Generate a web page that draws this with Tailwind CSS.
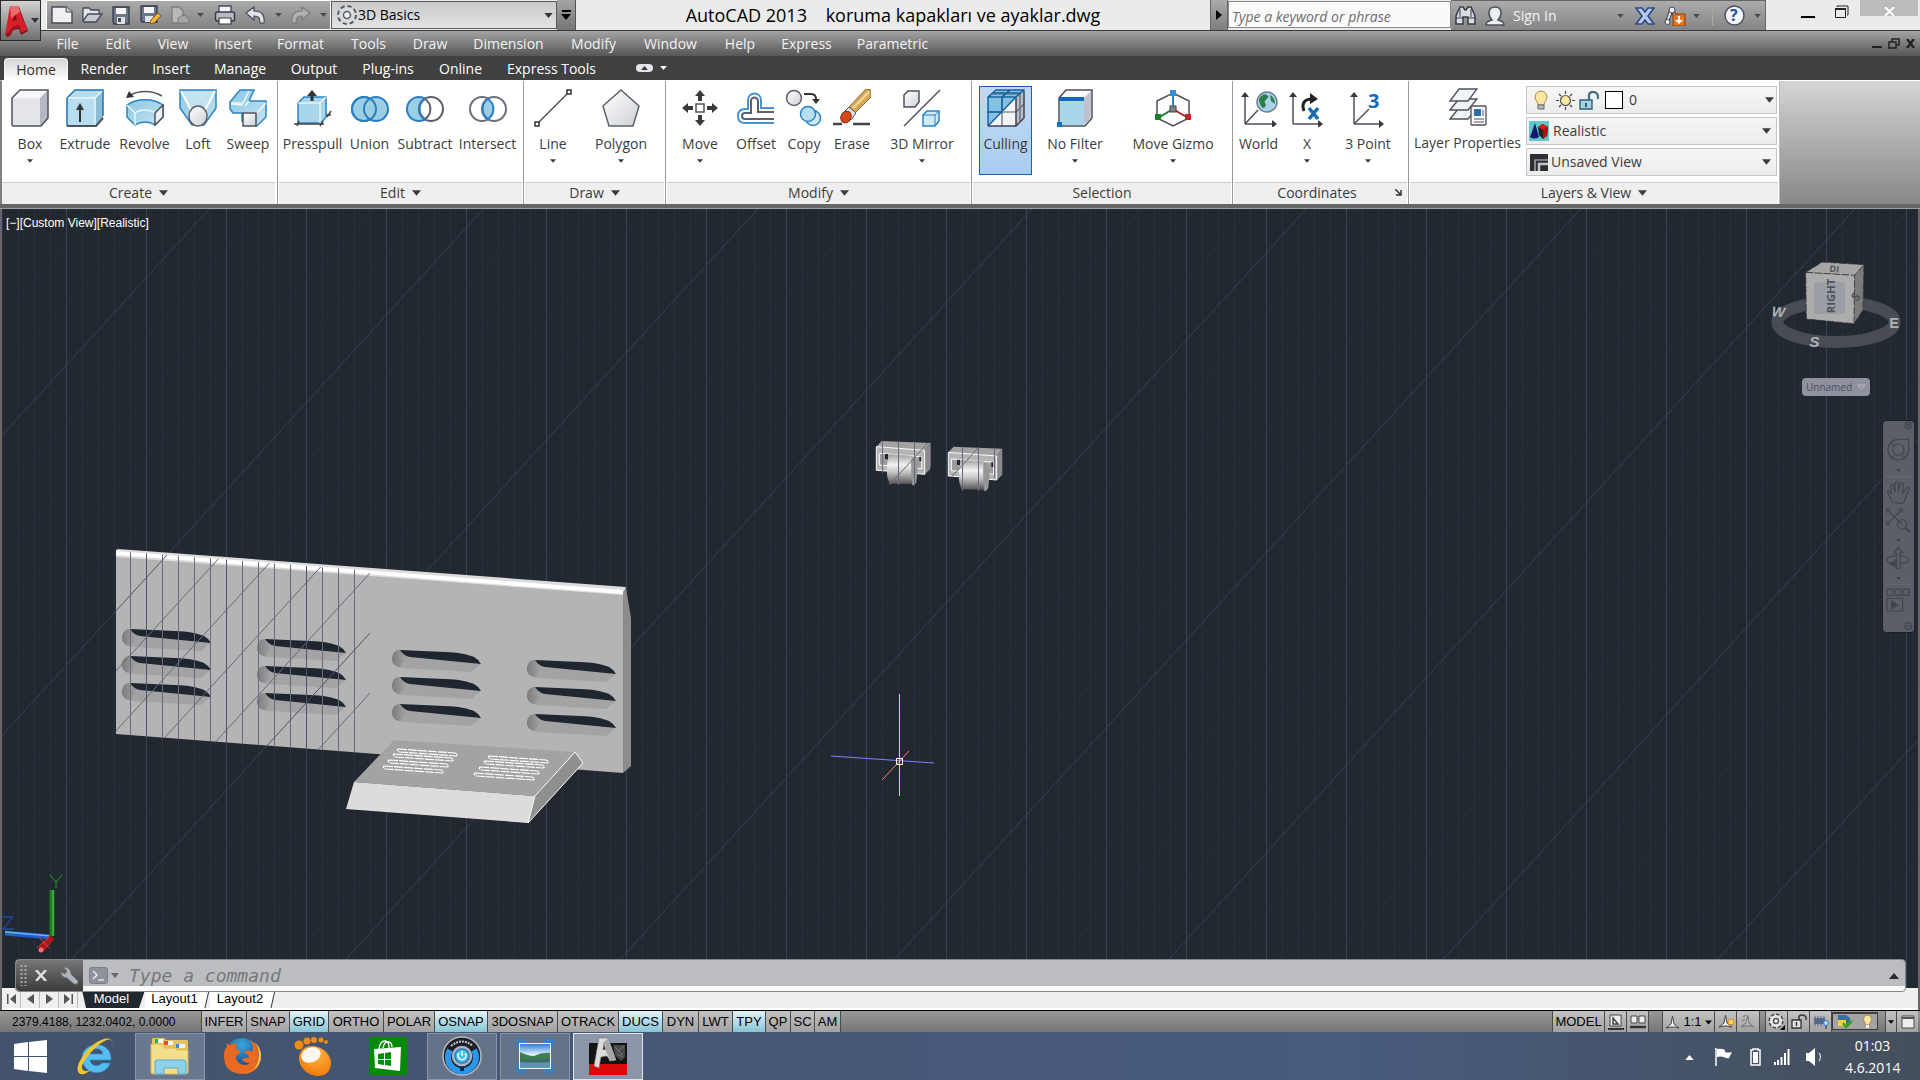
<!doctype html>
<html lang="tr">
  <head>
    <meta charset="UTF-8" />
    <meta name="viewport" content="width=device-width, initial-scale=1.0" />
    <title>AutoCAD 2013 - koruma kapakları ve ayaklar.dwg</title>
    <script src="https://cdn.jsdelivr.net/npm/@tailwindcss/browser@4"></script>
  </head>
  <body class="min-h-screen flex flex-col bg-[#666666] font-['Open_Sans','Noto_Sans',sans-serif] text-sm text-[#3c3c3c] overflow-hidden">

    <!-- shared icons and gradients -->
    <svg class="absolute w-0 h-0">
      <defs>
        <symbol id="tri" viewBox="0 0 10 6"><path d="M0 0h10L5 6z" fill="currentColor"/></symbol>
        <linearGradient id="gBlue" x1="0" y1="0" x2="1" y2="1"><stop offset="0" stop-color="#8cc8e4"/><stop offset="1" stop-color="#c4e4f1"/></linearGradient>
        <linearGradient id="gGray" x1="0" y1="0" x2="1" y2="1"><stop offset="0" stop-color="#ffffff"/><stop offset="1" stop-color="#cfd1d6"/></linearGradient>
        <linearGradient id="gCyl" x1="0" y1="0" x2="0" y2="1"><stop offset="0" stop-color="#a0a0a0"/><stop offset=".35" stop-color="#f2f2f2"/><stop offset=".6" stop-color="#c4c4c4"/><stop offset="1" stop-color="#505050"/></linearGradient>
        <linearGradient id="gCap" x1="0" y1="0" x2="1" y2="0"><stop offset="0" stop-color="#7c7c7c"/><stop offset="1" stop-color="#a5a5a5"/></linearGradient>
        <linearGradient id="gPhoto" x1="0" y1="0" x2="0" y2="1"><stop offset="0" stop-color="#2f7fd8"/><stop offset=".45" stop-color="#e6f3fb"/></linearGradient>
        <radialGradient id="gOrange" cx=".4" cy=".3" r=".8"><stop offset="0" stop-color="#ffb347"/><stop offset="1" stop-color="#ee7500"/></radialGradient>
        <radialGradient id="gFox" cx=".5" cy=".2" r=".7"><stop offset="0" stop-color="#38a8e0"/><stop offset="1" stop-color="#1c3f7c"/></radialGradient>
      </defs>
    </svg>

    <!-- title bar -->
    <header class="h-[31px] flex items-stretch bg-[#ebebeb] border-b border-[#3a3a3a]">
      <button class="relative z-10 w-[41px] h-[41px] shrink-0 flex items-center border border-[#2c2c2c] bg-linear-to-b from-[#d2d2d2] to-[#6f6f6f]" aria-label="Application menu">
        <svg class="w-[28px] h-[34px]" viewBox="0 0 28 34">
          <path d="M5 33 12 3h6l9 24-7 4-2-6-6 1-3 6z" fill="#7e1016"/>
          <path d="M4 31 9 2h8l9 24-6 3-2-8-7 2-2 8zM12 17l4-1-2-7z" fill="#d81e28"/>
          <path d="M9 2h8l2 6-9 6z" fill="#ee6a68"/>
          <path d="m4 31 8-8 6-2 1 3-6 1-4 6z" fill="#a3141c"/>
        </svg>
        <svg class="w-2 h-[5px] ml-[2px] text-[#2d3442]"><use href="#tri"/></svg>
      </button>
      <div class="ml-[5px] w-[285px] flex items-center bg-linear-to-b from-[#ababab] to-[#828282] border border-white">
        <button class="ml-[4px] w-[22px]" aria-label="New"><svg class="w-[22px] h-[18px]" viewBox="0 0 22 18"><path d="M1 1h14l6 5v11H1z" fill="#f0f0f3" stroke="#444a58" stroke-width="1.4"/><path d="M15 1v5h6" fill="#cfd2d8" stroke="#444a58"/></svg></button>
        <button class="ml-[8px] w-[22px]" aria-label="Open"><svg class="w-[22px] h-[16px]" viewBox="0 0 22 16"><path d="M2 14V1h6l2 2h8v4" fill="#e3e5e9" stroke="#444a58" stroke-width="1.3"/><path d="m2 14 5-7h14l-6 8H3z" fill="#c5c9d0" stroke="#444a58" stroke-width="1.3"/></svg></button>
        <button class="ml-[8px] w-[20px]" aria-label="Save"><svg class="w-[20px] h-[19px]" viewBox="0 0 20 19"><path d="M2 1h16v17H3l-1-2z" fill="#6c7688" stroke="#363d4b" stroke-width="1.3"/><path d="M5 2h10v6H5z" fill="#f6f6f8"/><path d="M6 11h8v7H6z" fill="#dde0e6"/><path d="M7 12h3v4H7z" fill="#434c5d"/></svg></button>
        <button class="ml-[9px] w-[22px]" aria-label="Save As"><svg class="w-[22px] h-[20px]" viewBox="0 0 22 20"><path d="M1 1h16v16H2l-1-1z" fill="#6c7688" stroke="#363d4b" stroke-width="1.3"/><path d="M4 2h10v6H4z" fill="#f6f6f8"/><path d="M5 11h8v6H5z" fill="#dde0e6"/><path d="m10 19 1-4 7-7 3 3-7 7z" fill="#f0b73c" stroke="#8a5a16"/></svg></button>
        <button class="ml-[8px] w-[20px]" aria-label="Plot preview"><svg class="w-[20px] h-[19px]" viewBox="0 0 20 19"><path d="M2 17V1h7l4 4v12z" fill="#b9b9b9" stroke="#7b7b7b" stroke-width="1.3"/><path d="M8 17v-5l3-2 4-1 4 5v3z" fill="#a6a6a6" stroke="#7b7b7b"/></svg></button>
        <svg class="ml-[7px] w-[7px] h-[4px] text-[#4a4a4a]"><use href="#tri"/></svg>
        <button class="ml-[10px] w-[22px]" aria-label="Print"><svg class="w-[22px] h-[20px]" viewBox="0 0 22 20"><path d="M5 8V1h12v7" fill="#f6f6f8" stroke="#454b57" stroke-width="1.3"/><rect x="1.5" y="7" width="19" height="9" rx="2" fill="#b8bbc2" stroke="#343a46" stroke-width="1.5"/><path d="M5 13h12v6H5z" fill="#fff" stroke="#343a46" stroke-width="1.2"/></svg></button>
        <button class="ml-[9px] w-[21px]" aria-label="Undo"><svg class="w-[21px] h-[18px]" viewBox="0 0 21 18"><path d="M1 7 9 1v4c8 0 11 4 10 12h-4c0-5-1-7-6-7v4z" fill="#e2e4e8" stroke="#434957" stroke-width="1.2"/></svg></button>
        <svg class="ml-[9px] w-[7px] h-[4px] text-[#4a4a4a]"><use href="#tri"/></svg>
        <button class="ml-[8px] w-[21px]" aria-label="Redo"><svg class="w-[21px] h-[18px]" viewBox="0 0 21 18"><path d="M20 7 12 1v4C4 5 1 9 2 17h4c0-5 1-7 6-7v4z" fill="#b0b0b0" stroke="#7b7b7b" stroke-width="1.2"/></svg></button>
        <svg class="ml-[9px] w-[7px] h-[4px] text-[#4a4a4a]"><use href="#tri"/></svg>
      </div>
      <div class="w-[226px] h-[28px] mt-px flex items-center border border-[#5c5c5c] bg-linear-to-b from-[#cacaca] to-[#e3e3e3] text-black">
        <svg class="ml-[4px] w-[22px] h-[22px]" viewBox="0 0 22 22"><circle cx="11" cy="11" r="8.5" fill="#d8d9dc" stroke="#555b66" stroke-width="3" stroke-dasharray="4 2.7"/><circle cx="11" cy="11" r="8" fill="#d8dade"/><circle cx="11" cy="11" r="3.5" fill="#f4f4f4" stroke="#555b66" stroke-width="1.5"/></svg>
        <select class="flex-1 appearance-none bg-transparent" aria-label="Workspace"><option>3D Basics</option></select>
        <svg class="mr-[3px] w-[9px] h-[5px] text-[#333333]"><use href="#tri"/></svg>
      </div>
      <button class="w-[19px] flex flex-col items-center justify-center gap-[2px] bg-linear-to-b from-[#a5a5a5] to-[#757575] border-r border-[#555555]" aria-label="Customize">
        <span class="w-[9px] h-[2px] bg-black"></span><svg class="w-[10px] h-[6px] text-black"><use href="#tri"/></svg>
      </button>
      <h1 class="flex-1 text-center text-[18px] leading-[30px] text-black whitespace-pre">AutoCAD 2013    koruma kapakları ve ayaklar.dwg</h1>
      <button class="w-[18px] flex items-center justify-center bg-linear-to-b from-[#ababab] to-[#7d7d7d] border-x border-[#666666]" aria-label="Collapse search"><svg class="w-[6px] h-[10px]" viewBox="0 0 6 10"><path d="M0 0v10l6-5z"/></svg></button>
      <input class="w-[223px] h-[27px] mt-px px-[3px] pt-[3px] italic bg-[#fafafa] border border-[#888888] placeholder:text-[#6d6d6d]" placeholder="Type a keyword or phrase" aria-label="Search" />
      <div class="w-[315px] flex items-center bg-linear-to-b from-[#ababab] to-[#858585] border-r border-t border-[#666666] text-[#f4f4f4]">
        <svg class="ml-[4px] w-[21px] h-[20px]" viewBox="0 0 21 20"><path d="M1 18V10l3-7 1-2h3l2 3h1l2-3h3l1 2 3 7v8h-7v-7H8v7z" fill="#dadce0" stroke="#363c48" stroke-width="1.5"/><path d="M1 12h7M13 12h7M5 3v8M16 3v8" stroke="#363c48"/></svg>
        <svg class="ml-[9px] w-[20px] h-[20px]" viewBox="0 0 20 20"><path d="M1 19c0-4 3-4 6-5-2-2-3-4-3-7 0-4 2-6 6-6s6 2 6 6c0 3-1 5-3 7 3 1 6 1 6 5z" fill="#eceef1" stroke="#4a505c" stroke-width="1.5"/></svg>
        <button class="ml-[8px] flex-1 text-left">Sign In</button>
        <svg class="w-[7px] h-[4px] text-[#4a4a4a]"><use href="#tri"/></svg>
        <svg class="ml-[11px] w-[20px] h-[18px]" viewBox="0 0 20 18"><path d="M1 1h6l3 4 3-4h6l-6 8 6 8h-6l-3-4-3 4H1l6-8z" fill="#b8c9e8" stroke="#2d4886" stroke-width="1.6"/></svg>
        <svg class="ml-[9px] w-[22px] h-[20px]" viewBox="0 0 22 20"><path d="m7 5-4 11M9 5l2 5" stroke="#3f4553" stroke-width="4"/><path d="m7 5-4 11M9 5l2 5" stroke="#e8e8ea" stroke-width="2"/><circle cx="8" cy="4" r="3" fill="#eee" stroke="#3f4553"/><circle cx="3.500" cy="16" r="2.500" fill="#eee" stroke="#3f4553"/><path d="M9 8h12v12H9z" fill="#e8731c" stroke="#8c3c08"/><path d="M14 10h2v4h3l-4 4-4-4h3z" fill="#fff"/></svg>
        <svg class="ml-[7px] w-[7px] h-[4px] text-[#4a4a4a]"><use href="#tri"/></svg>
        <span class="ml-[12px] h-[20px] w-px bg-[#a8a8a8]"></span>
        <button class="ml-[11px] w-[21px]" aria-label="Help"><svg class="w-[21px] h-[21px]" viewBox="0 0 21 21"><circle cx="10.500" cy="10.500" r="9.500" fill="#f4f5f8" stroke="#4c5262" stroke-width="1.500"/><text x="6" y="16" font-size="16" font-weight="bold" fill="#2353a4">?</text></svg></button>
        <svg class="ml-[9px] mr-[4px] w-[7px] h-[4px] text-[#4a4a4a]"><use href="#tri"/></svg>
      </div>
      <div class="w-[154px] flex items-start">
        <button class="w-[56px] h-[20px] flex justify-center items-end pb-[2px] pl-[28px]" aria-label="Minimize"><span class="w-[14px] h-[2px] bg-black"></span></button>
        <button class="w-[38px] h-[24px] flex items-center justify-center" aria-label="Restore"><svg class="w-[15px] h-[14px]" viewBox="0 0 15 14"><path d="M3 2V1h11v9h-1" fill="none" stroke="#222"/><path d="M1.500 4.500h10v8h-10z" fill="none" stroke="#222"/><path d="M1 4h11" stroke="#222" stroke-width="2"/></svg></button>
        <button class="w-[58px] h-[16px] bg-[#bcbcbc] flex items-center justify-center pt-[7px]" aria-label="Close"><svg class="w-[11px] h-[9px]" viewBox="0 0 11 9"><path d="m1 0 9 9M10 0 1 9" stroke="#fff" stroke-width="2"/></svg></button>
      </div>
    </header>

    <!-- menu bar -->
    <nav class="h-[25px] flex items-center pl-[43px] pr-[5px] text-center bg-linear-to-b from-[#a4a4a4] to-[#575757] text-[#f2f2f2]">
      <a href="#" class="w-[49px]">File</a>
      <a href="#" class="w-[52px]">Edit</a>
      <a href="#" class="w-[58px]">View</a>
      <a href="#" class="w-[62px]">Insert</a>
      <a href="#" class="w-[73px]">Format</a>
      <a href="#" class="w-[63px]">Tools</a>
      <a href="#" class="w-[60px]">Draw</a>
      <a href="#" class="w-[97px]">Dimension</a>
      <a href="#" class="w-[73px]">Modify</a>
      <a href="#" class="w-[81px]">Window</a>
      <a href="#" class="w-[58px]">Help</a>
      <a href="#" class="w-[75px]">Express</a>
      <a href="#" class="w-[97px]">Parametric</a>
      <div class="ml-auto flex items-center gap-[6px]">
        <button class="w-[10px] pt-[6px]" aria-label="Minimize drawing"><span class="block h-[2px] bg-[#222222]"></span></button>
        <button aria-label="Restore drawing"><svg class="w-[12px] h-[11px]" viewBox="0 0 12 11"><path d="M4 4V1h7v6H8M1 4h7v6H1z" fill="none" stroke="#222" stroke-width="1.500"/></svg></button>
        <button aria-label="Close drawing"><svg class="w-[9px] h-[9px]" viewBox="0 0 9 9"><path d="m1 0 7 9M8 0 1 9" stroke="#222" stroke-width="2.400"/></svg></button>
      </div>
    </nav>

    <!-- ribbon tabs -->
    <nav class="h-[24px] flex items-center pt-[2px] text-center bg-[#404040] text-white">
      <a href="#" class="ml-[4px] h-[22px] w-[64px] leading-[22px] rounded-t-sm bg-linear-to-b from-[#d6d6d6] to-white text-[#333333] border-t border-x border-[#f4f4f4]">Home</a>
      <a href="#" class="w-[72px]">Render</a>
      <a href="#" class="w-[62px]">Insert</a>
      <a href="#" class="w-[76px]">Manage</a>
      <a href="#" class="w-[72px]">Output</a>
      <a href="#" class="w-[76px]">Plug-ins</a>
      <a href="#" class="w-[69px]">Online</a>
      <a href="#" class="w-[113px]">Express Tools</a>
      <button class="ml-[28px] pb-[2px] flex items-center gap-[7px]" aria-label="Minimize ribbon">
        <span class="w-[17px] h-[8px] rounded-sm bg-[#e2e4ea] flex items-center justify-center"><svg class="w-[7px] h-[4px] rotate-180 text-[#333333]"><use href="#tri"/></svg></span>
        <svg class="w-[7px] h-[4px]"><use href="#tri"/></svg>
      </button>
    </nav>

    <!-- ribbon -->
    <div class="h-[124px] flex items-stretch border-l-2 border-[#808080] border-t border-t-white bg-linear-to-b from-[#d5d5d5] to-[#888888]">
      <section class="w-[276px] flex flex-col bg-white border-r border-[#9a9a9a]">
        <div class="flex-1 flex pl-[3px] pt-[8px]">
          <button class="w-[50px] flex flex-col items-center">
            <svg class="w-[38px] h-[38px]" viewBox="0 0 38 38"><path d="M1 9 9 1h28v28l-7 8H2l-1-1z" fill="#f8f8fa"/><path d="M1 9h28v28H2l-1-1z" fill="#e4e5ea"/><path d="m29 9 8-8v28l-7 8h-1z" fill="#b4b8c2"/><path d="M1 9 9 1h28v28l-7 8H2l-1-1z" fill="none" stroke="#4d515c" stroke-width="1.500"/></svg>
            <span class="mt-[7px] leading-[20px]">Box</span><svg class="mt-[5px] w-[6px] h-[4px]"><use href="#tri"/></svg>
          </button>
          <button class="w-[60px] flex flex-col items-center">
            <svg class="w-[38px] h-[38px]" viewBox="0 0 38 38"><path d="M1 9 9 1h28v28l-7 8H1z" fill="#b7deee"/><path d="m29 9 8-8v28l-7 8h-1z" fill="#8cbdd4"/><path d="M1 9 9 1h28v26M1 9v28" fill="none" stroke="#1f73b5" stroke-width="1.500"/><path d="M2 9h27v27M29 9l7-7" fill="none" stroke="#e8f6fb" stroke-width="1.500"/><path d="M1 37h29l7-8" fill="none" stroke="#4d515c" stroke-width="2"/><path d="M14 33V19" stroke="#333" stroke-width="2"/><path d="m10 21 4-7 4 7z" fill="#333"/></svg>
            <span class="mt-[7px] leading-[20px]">Extrude</span>
          </button>
          <button class="w-[59px] flex flex-col items-center">
            <svg class="w-[38px] h-[38px]" viewBox="0 0 38 38"><path d="M1 16c10-7 26-7 36 0v12l-8 8c-6-4-14-4-20 0l-8-8z" fill="url(#gBlue)" stroke="#2a83c4" stroke-width="1.500"/><path d="m1 16 8 8c5-4 15-4 20 0M9 24v12" fill="none" stroke="#e8f6fb" stroke-width="1.500"/><path d="m29 24 8-8v12l-8 8z" fill="#f0f1f3" stroke="#4d515c" stroke-width="1.500"/><path d="M3 7C12 1 26 1 36 7" fill="none" stroke="#555" stroke-width="1.500"/><path d="M0 9 3 2l5 6z" fill="#333"/></svg>
            <span class="mt-[7px] leading-[20px]">Revolve</span>
          </button>
          <button class="w-[48px] flex flex-col items-center">
            <svg class="w-[38px] h-[38px]" viewBox="0 0 38 38"><path d="M1 1h36v18L25 36H13L1 19z" fill="url(#gBlue)" stroke="#2a83c4" stroke-width="1.500"/><path d="m2 2 11 19h12L36 2z" fill="#c3e3f1"/><path d="m2 2 11 21M36 2 25 23" stroke="#fff" stroke-width="2"/><ellipse cx="19" cy="27" rx="9" ry="10" fill="url(#gGray)" stroke="#5b606b" stroke-width="1.500"/></svg>
            <span class="mt-[7px] leading-[20px]">Loft</span>
          </button>
          <button class="w-[52px] flex flex-col items-center">
            <svg class="w-[38px] h-[38px]" viewBox="0 0 38 38"><path d="M11 1h14l-5 11h17v16l-9 9-4-1-11-4v-8H4l-3-4v-7z" fill="url(#gBlue)" stroke="#2a83c4" stroke-width="1.500"/><path d="M2 14h12l6-12M14 24h14l9-10M2 15l12 1M20 12l-4 5" fill="none" stroke="#eef8fc" stroke-width="1.500"/><path d="M14 24h13v13H14z" fill="url(#gGray)" stroke="#4d515c" stroke-width="1.500"/></svg>
            <span class="mt-[7px] leading-[20px]">Sweep</span>
          </button>
        </div>
        <h2 class="h-[22px] mr-[2px] pb-[2px] flex items-center justify-center gap-[7px] bg-[#efefef] border-t border-[#cccccc]">Create <svg class="w-[9px] h-[6px]"><use href="#tri"/></svg></h2>
      </section>
      <section class="w-[246px] flex flex-col bg-white border-r border-[#9a9a9a]">
        <div class="flex-1 flex pl-[5px] pt-[8px]">
          <button class="w-[59px] flex flex-col items-center">
            <svg class="w-[38px] h-[38px]" viewBox="0 0 38 38"><path d="m4 14 6-6h22v20l-5 6H4z" fill="#a9d7ea" stroke="#2a83c4" stroke-width="1.500"/><path d="M4 14h22v20M26 14l6-6" fill="none" stroke="#e8f6fb" stroke-width="1.500"/><path d="M0 35h30M3 37l2-5M26 37l3-5M33 28l4-6M32 26h5" stroke="#444" stroke-width="1.500"/><path d="M18 12V6" stroke="#333" stroke-width="3"/><path d="m13 7 5-6 5 6z" fill="#333"/></svg>
            <span class="mt-[7px] leading-[20px]">Presspull</span>
          </button>
          <button class="w-[55px] flex flex-col items-center">
            <svg class="w-[38px] h-[38px]" viewBox="0 0 38 38"><g fill="#9bcfe6" stroke="#2a7fc2" stroke-width="2"><circle cx="13" cy="20" r="12"/><circle cx="25" cy="20" r="12"/><circle cx="13" cy="20" r="12" fill="none"/></g></svg>
            <span class="mt-[7px] leading-[20px]">Union</span>
          </button>
          <button class="w-[56px] flex flex-col items-center">
            <svg class="w-[38px] h-[38px]" viewBox="0 0 38 38"><circle cx="13" cy="20" r="12" fill="#9bcfe6" stroke="#2a7fc2" stroke-width="2"/><circle cx="25" cy="20" r="12" fill="#fff" stroke="#5b606b" stroke-width="2"/><path d="M19 10a12 12 0 0 1 0 20" fill="none" stroke="#5b606b" stroke-width="2"/><path d="M19 10a12 12 0 0 0 0 20" fill="none" stroke="#2a7fc2" stroke-width="2"/></svg>
            <span class="mt-[7px] leading-[20px]">Subtract</span>
          </button>
          <button class="w-[69px] flex flex-col items-center">
            <svg class="w-[38px] h-[38px]" viewBox="0 0 38 38"><g fill="#fff" stroke="#6b707b" stroke-width="2"><circle cx="13" cy="20" r="12"/><circle cx="25" cy="20" r="12"/></g><path d="M19 10a12 12 0 0 1 0 20 12 12 0 0 1 0-20z" fill="#9bcfe6" stroke="#2a7fc2" stroke-width="2"/></svg>
            <span class="mt-[7px] leading-[20px]">Intersect</span>
          </button>
        </div>
        <h2 class="h-[22px] mx-px pb-[2px] flex items-center justify-center gap-[7px] bg-[#efefef] border-t border-[#cccccc]">Edit <svg class="w-[9px] h-[6px]"><use href="#tri"/></svg></h2>
      </section>
      <section class="w-[142px] flex flex-col bg-white border-r border-[#9a9a9a]">
        <div class="flex-1 flex pl-[4px] pt-[8px]">
          <button class="w-[50px] flex flex-col items-center">
            <svg class="w-[38px] h-[38px]" viewBox="0 0 38 38"><path d="M3 35 35 3" stroke="#4d515c" stroke-width="1.500"/><path d="M1 33h4v4H1zM33 1h4v4h-4z" fill="#fff" stroke="#333" stroke-width="1.500"/></svg>
            <span class="mt-[7px] leading-[20px]">Line</span><svg class="mt-[5px] w-[6px] h-[4px]"><use href="#tri"/></svg>
          </button>
          <button class="w-[86px] flex flex-col items-center">
            <svg class="w-[38px] h-[38px]" viewBox="0 0 38 38"><path d="m19 1 18 16-6 20H7L1 17z" fill="url(#gGray)" stroke="#5b606b" stroke-width="1.500"/></svg>
            <span class="mt-[7px] leading-[20px]">Polygon</span><svg class="mt-[5px] w-[6px] h-[4px]"><use href="#tri"/></svg>
          </button>
        </div>
        <h2 class="h-[22px] mx-px pb-[2px] flex items-center justify-center gap-[7px] bg-[#efefef] border-t border-[#cccccc]">Draw <svg class="w-[9px] h-[6px]"><use href="#tri"/></svg></h2>
      </section>
      <section class="w-[306px] flex flex-col bg-white border-r border-[#9a9a9a]">
        <div class="flex-1 flex pl-[5px] pt-[8px]">
          <button class="w-[58px] flex flex-col items-center">
            <svg class="w-[38px] h-[38px]" viewBox="0 0 38 38"><g fill="#3a3a3e"><path d="m19 1 5 6h-3v5h-4V7h-3zM19 37l5-6h-3v-5h-4v5h-3zM1 19l6-5v3h5v4H7v3zM37 19l-6-5v3h-5v4h5v3z"/></g><path d="M15 15h8v8h-8z" fill="#fff" stroke="#555" stroke-width="1.500"/></svg>
            <span class="mt-[7px] leading-[20px]">Move</span><svg class="mt-[5px] w-[6px] h-[4px]"><use href="#tri"/></svg>
          </button>
          <button class="w-[54px] flex flex-col items-center">
            <svg class="w-[38px] h-[38px]" viewBox="0 0 38 38"><g fill="none" stroke-width="2"><path d="M37 34H8q-7 0-7-7t7-7h3V11a6 6 0 0 1 13 0v8h13" stroke="#4a93d0"/><path d="M37 30H8q-3 0-3-3t3-3h6V12a3 3 0 0 1 7 0v11h16" stroke="#5b606b"/></g></svg>
            <span class="mt-[7px] leading-[20px]">Offset</span>
          </button>
          <button class="w-[42px] flex flex-col items-center">
            <svg class="w-[38px] h-[38px]" viewBox="0 0 38 38"><circle cx="9" cy="9" r="7.500" fill="url(#gGray)" stroke="#5b606b" stroke-width="1.500"/><circle cx="28" cy="29" r="7.500" fill="#cfe9f5" stroke="#2a83c4" stroke-width="1.500"/><circle cx="23" cy="25" r="7.500" fill="#b9def0" stroke="#2a83c4" stroke-width="1.500"/><path d="M19 5h7q5 0 5 5" fill="none" stroke="#333" stroke-width="2"/><path d="m27 10 4 5 4-5z" fill="#333"/></svg>
            <span class="mt-[7px] leading-[20px]">Copy</span>
          </button>
          <button class="w-[54px] flex flex-col items-center">
            <svg class="w-[38px] h-[38px]" viewBox="0 0 38 38"><path d="m16 18 17-18 5 1v7L22 24z" fill="#d7a957" stroke="#8a6a2d"/><path d="m20 19 16-16" stroke="#f6dca0" stroke-width="2"/><path d="m10 24 6-6 7 6-5 7z" fill="#e2e3e6" stroke="#4d515c"/><ellipse cx="13" cy="28" rx="5" ry="6" transform="rotate(30 13 28)" fill="#d4491a" stroke="#8a2b0b"/><path d="M0 35h9M20 35h17" stroke="#444" stroke-width="2.500"/></svg>
            <span class="mt-[7px] leading-[20px]">Erase</span>
          </button>
          <button class="w-[86px] flex flex-col items-center">
            <svg class="w-[38px] h-[38px]" viewBox="0 0 38 38"><path d="M1 37 37 1" stroke="#4d515c" stroke-width="1.500"/><path d="m1 6 4-4h11v11l-4 5H1z" fill="url(#gGray)" stroke="#4d515c" stroke-width="1.500"/><path d="m20 26 4-4h12v10l-4 5H20z" fill="#cfeaf6" stroke="#2a83c4" stroke-width="1.500"/><path d="M20 26h12v11M32 26l4-4" fill="none" stroke="#2a83c4"/></svg>
            <span class="mt-[7px] leading-[20px]">3D Mirror</span><svg class="mt-[5px] w-[6px] h-[4px]"><use href="#tri"/></svg>
          </button>
        </div>
        <h2 class="h-[22px] mx-px pb-[2px] flex items-center justify-center gap-[7px] bg-[#efefef] border-t border-[#cccccc]">Modify <svg class="w-[9px] h-[6px]"><use href="#tri"/></svg></h2>
      </section>
      <section class="w-[261px] flex flex-col bg-white border-r border-[#9a9a9a]">
        <div class="flex-1 flex pl-[7px] pt-[5px]">
          <button class="w-[53px] h-[89px] pt-[2px] flex flex-col items-center border border-[#1464b4] bg-linear-to-b from-[#c2daf4] to-[#a9cdf0]">
            <svg class="w-[38px] h-[38px]" viewBox="0 0 38 38"><path d="m1 8 8-7h28v28l-8 8H1z" fill="#f4f5f8"/><path d="m29 8 8-7v28l-8 8z" fill="#b9bdc6"/><path d="M1 8h28L1 37zM1 8l8-7h28l-8 7z" fill="#86c0e2"/><path d="M1 23h28l8-8M15 8v29M15 8l8-7M5 5h28v27" fill="none" stroke="#5c6470" stroke-width="1.200"/><path d="M1 37V8l8-7h28l-8 7H1M5 4h28M15 8l8-7M15 8v15H1M29 8 1 37" fill="none" stroke="#14649f" stroke-width="1.500"/><path d="M29 9v28l8-8V2M1 37h28" fill="none" stroke="#3f4653" stroke-width="1.500"/></svg>
            <span class="mt-[7px] leading-[20px]">Culling</span>
          </button>
          <button class="w-[86px] pt-[3px] flex flex-col items-center">
            <svg class="w-[38px] h-[38px]" viewBox="0 0 38 38"><path d="m3 9 7-8h26v28l-7 8H3z" fill="#fafafb" stroke="#4d515c" stroke-width="1.500"/><path d="m28 9 7-7v27l-7 7z" fill="#bfc2ca"/><path d="M4 12h24v24H4z" fill="#a9d6e8"/><path d="M3 8h25v4H3z" fill="#0f67b5"/><path d="M1 33h5v5H1z" fill="#1173c6"/></svg>
            <span class="mt-[7px] leading-[20px]">No Filter</span><svg class="mt-[5px] w-[6px] h-[4px]"><use href="#tri"/></svg>
          </button>
          <button class="w-[110px] pt-[3px] flex flex-col items-center">
            <svg class="w-[38px] h-[38px]" viewBox="0 0 38 38"><path d="m19 4 16 8v17l-16 8-16-8V12z" fill="none" stroke="#4d515c" stroke-width="1.500"/><path d="M19 20V5" stroke="#2a83c4" stroke-width="2"/><path d="M19 20 4 29" stroke="#1e7a2b" stroke-width="2"/><path d="m19 20 15 9" stroke="#b3202a" stroke-width="2"/><rect x="16" y="1" width="6" height="6" fill="#2c8fe0"/><rect x="1" y="25" width="6" height="6" fill="#16852a"/><rect x="31" y="25" width="6" height="6" fill="#c8202c"/><rect x="16" y="17" width="6" height="6" fill="#7d8087" stroke="#444"/></svg>
            <span class="mt-[7px] leading-[20px]">Move Gizmo</span><svg class="mt-[5px] w-[6px] h-[4px]"><use href="#tri"/></svg>
          </button>
        </div>
        <h2 class="h-[22px] mx-px pb-[2px] flex items-center justify-center bg-[#efefef] border-t border-[#cccccc]">Selection</h2>
      </section>
      <section class="w-[176px] flex flex-col bg-white border-r border-[#9a9a9a]">
        <div class="flex-1 flex pl-[3px] pt-[8px]">
          <button class="w-[45px] flex flex-col items-center">
            <svg class="w-[38px] h-[38px]" viewBox="0 0 38 38"><path d="M5 35V7M5 35h28M5 35l13-14" fill="none" stroke="#4d515c" stroke-width="1.500"/><path d="m1 8 4-5 4 5zM32 31l5 4-5 4z" fill="#3a3a3e"/><circle cx="27" cy="13" r="10" fill="#a9d3ea" stroke="#6c7f92" stroke-width="1.500"/><path d="M19 10c3-6 8-5 9-3s-2 3-3 5 2 3 0 6-6-2-6-8M30 6c4 2 5 6 5 9l-4-3z" fill="#2f7d4b"/></svg>
            <span class="mt-[7px] leading-[20px]">World</span>
          </button>
          <button class="w-[52px] flex flex-col items-center">
            <svg class="w-[38px] h-[38px]" viewBox="0 0 38 38"><path d="M5 35V7M5 35h28" fill="none" stroke="#4d515c" stroke-width="1.500"/><path d="m1 8 4-5 4 5zM30 31l5 4-5 4z" fill="#3a3a3e"/><path d="M16 22c-3-8 1-12 8-12" fill="none" stroke="#222" stroke-width="3"/><path d="m22 4 8 6-8 5z" fill="#222"/><path d="m21 19 9 11M30 19l-9 11" stroke="#1568b4" stroke-width="3.500"/></svg>
            <span class="mt-[7px] leading-[20px]">X</span><svg class="mt-[5px] w-[6px] h-[4px]"><use href="#tri"/></svg>
          </button>
          <button class="w-[70px] flex flex-col items-center">
            <svg class="w-[38px] h-[38px] overflow-visible" viewBox="0 0 38 38"><path d="M5 35V7M5 35h28M5 35l15-15" fill="none" stroke="#4d515c" stroke-width="1.500"/><path d="m1 8 4-5 4 5zM30 31l5 4-5 4z" fill="#3a3a3e"/><text x="19" y="19" font-size="20" font-weight="bold" fill="#1568b4">3</text></svg>
            <span class="mt-[7px] leading-[20px]">3 Point</span><svg class="mt-[5px] w-[6px] h-[4px]"><use href="#tri"/></svg>
          </button>
        </div>
        <h2 class="h-[22px] mx-px px-[5px] pb-[2px] flex items-center bg-[#efefef] border-t border-[#cccccc]"><span class="flex-1 text-center">Coordinates</span><svg class="w-[7px] h-[7px]" viewBox="0 0 7 7"><path d="m0 0 5 5M6 1v5H1" fill="none" stroke="#333" stroke-width="1.500"/></svg></h2>
      </section>
      <section class="w-[371px] flex flex-col bg-white border-r border-[#bbbbbb]">
        <div class="flex-1 flex pt-[5px] pr-[2px]">
          <button class="w-[117px] flex flex-col items-center">
            <svg class="w-[38px] h-[40px]" viewBox="0 0 38 40"><g fill="#f2f3f5" stroke="#4d515c" stroke-width="1.300"><path d="M1 33 10 22h18l-9 11z"/><path d="M1 24l9-11h18l-9 11z"/><path d="M1 15 10 3h18l-9 12z"/><rect x="22" y="20" width="15" height="19" rx="1" fill="#fafafa"/></g><path d="M25 23h7v7h-7z" fill="#2b6fb0"/><path d="M25 33h10M25 36h10M34 24v6" stroke="#555"/></svg>
            <span class="mt-[7px] leading-[20px]">Layer Properties</span>
          </button>
          <div class="flex-1 flex flex-col gap-[3px]">
            <div class="h-[28px] flex items-center border border-[#c6c6c6] bg-linear-to-b from-[#f6f6f6] to-[#ececec]">
              <svg class="ml-[6px] w-[16px] h-[20px]" viewBox="0 0 16 20"><path d="M8 1a6 6 0 0 1 6 6c0 4-3 4-3 8H5c0-4-3-4-3-8a6 6 0 0 1 6-6z" fill="#fbe6a2" stroke="#a58b46"/><path d="M5 15h6v4H5z" fill="#b8bcc4" stroke="#666"/></svg>
              <svg class="ml-[7px] w-[19px] h-[19px]" viewBox="0 0 19 19"><circle cx="9.500" cy="9.500" r="5" fill="#fbe6a2" stroke="#555" stroke-width="1.200"/><path d="M9.500 0v3M9.500 16v3M0 9.500h3M16 9.500h3M3 3l2 2M14 14l2 2M3 16l2-2M14 5l2-2" stroke="#444" stroke-width="1.200"/></svg>
              <svg class="ml-[4px] w-[20px] h-[19px]" viewBox="0 0 20 19"><path d="M1 9h12v9H1z" fill="#a7d2e2" stroke="#2f5f78" stroke-width="1.400"/><path d="M10 9V5q0-4 4-4t5 4v3" fill="none" stroke="#3c6d86" stroke-width="2.200"/><path d="M7 12v4" stroke="#2f5f78" stroke-width="2"/></svg>
              <span class="ml-[6px] w-[18px] h-[18px] border border-black bg-white"></span>
              <select class="ml-[6px] flex-1 appearance-none" aria-label="Layer"><option>0</option></select>
              <svg class="mr-[2px] w-[9px] h-[6px]"><use href="#tri"/></svg>
            </div>
            <div class="h-[28px] flex items-center border border-[#c6c6c6] bg-linear-to-b from-[#f6f6f6] to-[#ececec]">
              <svg class="ml-[2px] w-[20px] h-[20px]" viewBox="0 0 20 20"><path d="M0 0h20v20H0z" fill="#5fc9c9"/><path d="M6 2 1 16q4 3 9 0z" fill="#101a6e"/><path d="m9 6 5-3 5 3-1 9-4 3-4-4z" fill="#222"/><path d="m9 6 5-3 5 3-5 3z" fill="#e01818"/><path d="m14 9 5-3-1 9-4 3z" fill="#a81212"/></svg>
              <select class="ml-[4px] flex-1 appearance-none" aria-label="Visual style"><option>Realistic</option></select>
              <svg class="mr-[5px] w-[9px] h-[6px]"><use href="#tri"/></svg>
            </div>
            <div class="h-[28px] flex items-center border border-[#c6c6c6] bg-linear-to-b from-[#f6f6f6] to-[#ececec]">
              <svg class="ml-[3px] w-[18px] h-[17px]" viewBox="0 0 18 17"><path d="M0 0h18v17H0z" fill="#2d2f33"/><path d="M5 17V6h13" fill="none" stroke="#c3c5c9" stroke-width="1.200"/><path d="M9 17v-7h9" fill="none" stroke="#c3c5c9" stroke-width="2.500"/></svg>
              <select class="ml-[3px] flex-1 appearance-none" aria-label="View"><option>Unsaved View</option></select>
              <svg class="mr-[5px] w-[9px] h-[6px]"><use href="#tri"/></svg>
            </div>
          </div>
        </div>
        <h2 class="h-[22px] mx-px pb-[2px] flex items-center justify-center gap-[7px] bg-[#efefef] border-t border-[#cccccc]">Layers &amp; View <svg class="w-[9px] h-[6px]"><use href="#tri"/></svg></h2>
      </section>
    </div>
    <div class="h-[5px] bg-[#666666] border-b border-[#a0a0a0]"></div>

    <!-- drawing area -->
    <main class="relative flex-1 mx-[2px] bg-[#212830]">
      <svg class="absolute inset-0 w-full h-full overflow-hidden">
        <defs>
          <path id="minor" fill="none"/>
          <path id="major" fill="none"/>
          <clipPath id="plateClip"><path d="M116 551 370 571V754L116 734z"/></clipPath>
          <clipPath id="partsClip"><path d="M876 446 883 441 931 443V466L920 474 917 485H888L883 473 876 470zM948 452 954 446 1003 449V472L990 481 986 491H960L957 478 948 476z"/></clipPath>
          <g id="slot">
            <path d="M130 629c-6 0-8 5-8 9 0 5 5 9 11 9l68 4 10-8z" fill="#a3a3a3"/>
            <path d="M130 629c-6 0-8 5-8 9 0 4 3 8 8 8l7-9z" fill="url(#gCap)"/>
            <path d="m130 629 45 2c12 0 25 3 29 5q4 2 7 7l-71-7q-6-1-10-7z" fill="#1f2630"/>
          </g>
          <g id="louver"><use href="#slot"/><use href="#slot" y="27"/><use href="#slot" y="54"/></g>
          <g id="vents" fill="#a3a3a3" stroke="#fff" stroke-width="1.200" stroke-dasharray="9 1">
            <path d="m398 749 57 4q4 2 1 3l-56-4q-4-1-2-3z"/>
            <path d="m394 754 57 4q4 2 1 3l-56-4q-4-1-2-3z"/>
            <path d="m389 760 57 4q4 2 1 3l-56-4q-4-1-2-3z"/>
            <path d="m384 766 57 4q4 2 1 3l-56-4q-4-1-2-3z"/>
          </g>
          <g id="foot">
            <path d="m169 80 16-17 146 6-17 22z" fill="#a2a2a2"/>
            <path d="m314 91 17-22v78l-17 17z" fill="#8a8a8a"/>
            <path d="m169 80 145 11v72l-34-3-80-7-31-2z" fill="#b4b4b4" stroke="#fff" stroke-width="3"/>
            <path d="m178 100 127 10v36l-27-3-100-8z" fill="#9c9c9c" stroke="#fff" stroke-width="3"/>
            <path d="M195 102h9v16h-9zM298 110h6v14h-6z" fill="#1f2630"/>
            <path d="m208 103 68 4q-6 45 5 86l-73-2q-16-40 0-88z" fill="url(#gCyl)"/>
            <path d="M276 110q12 10 18 27l-5 50q-6 12-12 9-6-40-1-86z" fill="#969696"/>
          </g>
        </defs>
        <g transform="translate(-2 -209)">
          <use href="#minor" stroke="#292f3e"/>
          <use href="#major" stroke="#3a4056"/>

          <!-- guard plate -->
          <path d="m116 553 507 38v182L116 734z" fill="#b4b4b4"/>
          <path d="m116 550 2-1 508 38-3 8-507-38z" fill="#dcdcdc"/>
          <path d="m116 553 507 39" stroke="#fff" stroke-width="4"/>
          <path d="m623 592 3-4 5 30v148l-8 7z" fill="#8c8c8c"/>
          <use href="#louver"/><use href="#louver" x="135" y="10"/><use href="#louver" x="270" y="21"/><use href="#louver" x="405" y="31"/>
          <g clip-path="url(#plateClip)"><use href="#minor" stroke="#686a7e"/><use href="#major" stroke="#50536a"/></g>

          <!-- lower cover -->
          <path d="m394 740 181 12-40 44-181-14z" fill="#a3a3a3"/>
          <path d="m354 782 181 14-7 27-182-14z" fill="#dcdcdc"/>
          <path d="m575 752 8 11-55 60 7-27z" fill="#8f8f8f" stroke="#fff"/>
          <use href="#vents"/><use href="#vents" x="91" y="7"/>

          <!-- feet -->
          <g transform="translate(820 420) scale(.3333)"><use href="#foot"/><use href="#foot" x="216" y="17"/></g>
          <g clip-path="url(#partsClip)"><use href="#minor" stroke="#686a7e"/><use href="#major" stroke="#50536a"/></g>

          <!-- cursor -->
          <path d="m831 756 103 7" stroke="#8080ff" stroke-width="1.200"/>
          <path d="m882 780 27-29" stroke="#ff7f7f"/>
          <path d="M899.500 694v102" stroke="#80ff80"/>
          <path d="M896.500 758.500h6v6h-6z" fill="none" stroke="#fff"/>
        </g>
      </svg>

      <p class="absolute left-[4px] top-[6px] text-xs text-white font-['Liberation_Sans',sans-serif]">[−][Custom View][Realistic]</p>

      <!-- UCS icon -->
      <svg class="absolute left-0 bottom-[30px] w-[70px] h-[90px]" viewBox="2 868 70 90">
        <path d="m5 933 46 4" stroke="#1a5fd0" stroke-width="5"/><path d="m5 932 46 4" stroke="#6fb0f4" stroke-width="1.500"/>
        <path d="M52 890v46" stroke="#178017" stroke-width="5"/><path d="M53 890v46" stroke="#3ca83c" stroke-width="2"/>
        <path d="M52 937 41 950" stroke="#b01818" stroke-width="6"/><circle cx="41" cy="950" r="2.500" fill="#f07070"/>
        <path d="m50 875 6 7 6-7M56 882v6" fill="none" stroke="#22a522"/>
        <path d="M2 917h11L3 929h11" fill="none" stroke="#2255cc"/>
        <path d="m37 935 12 13M49 937 37 948" stroke="#e04040"/>
      </svg>

      <!-- view cube -->
      <svg class="absolute right-0 top-[31px] w-[178px] h-[112px]" viewBox="0 0 534 336">
        <ellipse cx="288" cy="246" rx="176" ry="60" fill="none" stroke="#484c54" stroke-width="36"/>
        <path d="m197 97 50-31 125 8-28 32z" fill="#a6a6a6"/>
        <path d="m344 106 28-32-3 136-27 41z" fill="#7b7b7b"/>
        <path d="m197 97 147 9-2 145-143-14z" fill="#acacac"/>
        <path d="M222 127h93v95h-93z" fill="#9b9ea4"/>
        <path d="m197 97 147 9-2 145-143-14zM197 97l50-31 125 8-28 32M372 74l-3 136-27 41" fill="none" stroke="#30343a" stroke-width="2.500" stroke-dasharray="22 5"/>
        <g font-weight="bold" fill="#4d535d">
          <text transform="translate(284 220) rotate(-90)" font-size="34">RIGHT</text>
          <text transform="translate(268 95) rotate(4)" font-size="27">DI</text>
          <text transform="translate(350 186) rotate(-50)" font-size="36">S</text>
        </g>
        <g font-weight="bold" fill="#b0b3b8" font-family="Liberation Sans">
          <text transform="rotate(6 92 226)" x="94" y="228" font-style="italic" font-size="42">W</text>
          <text x="448" y="264" font-size="44">E</text>
          <text x="208" y="322" font-style="italic" font-size="46">S</text>
        </g>
      </svg>
      <button class="absolute right-[48px] top-[169px] w-[68px] h-[18px] rounded bg-[#8e919e] flex items-center justify-between px-[4px] text-[10px] text-[#4c505e]">Unnamed <svg class="w-[9px] h-[6px]" viewBox="0 0 9 6"><path d="M1 1h7L4.500 5z" fill="none" stroke="#b8bac6"/></svg></button>

      <!-- navigation bar -->
      <div class="absolute right-[3px] top-[211px] w-[33px] h-[213px] rounded border border-[#1b2026] bg-[#5b6067]">
        <svg class="w-[31px] h-[211px]" viewBox="431 546 93 633" fill="none" stroke="#41464e" stroke-width="3.500">
          <circle cx="507" cy="559" r="10"/><path d="m502 554 10 10M512 554l-10 10"/>
          <path d="M477 601h31v31a31 31 0 1 1-31-31z"/><circle cx="477" cy="632" r="17"/>
          <path d="m454 661 12-14M500 661l-11-14M454 608l12 13"/>
          <path d="M471 691h14l-7 7z" fill="#333840" stroke="none"/><path d="M438 713h78M438 1036h78" stroke="#6c7178" stroke-width="2"/>
          <path d="m460 790-16-30q4-8 12 4l-2-24q6-9 9 4l4 14v-26q6-8 10 1v26l6-25q8-6 9 3l-3 27 12-17q8-2 8 3l-15 39-8 5z"/>
          <path d="m444 812 43 43M487 812l-43 43M442 822v-11h11M478 811h11v11M442 846v11h11"/><circle cx="488" cy="856" r="14"/><path d="m498 866 14 13" stroke-width="7"/>
          <path d="M471 901h14l-7 7zM471 1015h14l-7 7z" fill="#333840" stroke="none"/>
          <path d="M471 989v-47h-7l13-17 13 17h-8v47zM471 950c-38 4-38 20-8 24M482 950c34 4 34 20 2 24"/><path d="m452 974 15-9v18z" fill="#41464e"/>
          <path d="M443 1051h18v18h-18zM467 1051h18v18h-18zM491 1051h18v18h-18zM443 1078h47v38h-47z"/><path d="m457 1086 18 12-18 12z" fill="#41464e"/>
          <circle cx="507" cy="1161" r="10"/><path d="M501 1161h12"/>
        </svg>
      </div>

      <!-- command line, hangs a little over the layout tabs -->
      <div class="absolute z-20 left-[13px] right-[12px] -bottom-[4px] h-[33px] flex items-center rounded border border-[#85878a] bg-linear-to-b from-[#bcbdc0] from-85% to-[#fafafa] to-85%">
        <div class="w-[67px] h-full flex items-center rounded-l bg-linear-to-b from-[#777777] to-[#3c3c3c]">
          <svg class="ml-[4px] w-[8px] h-[21px]" viewBox="0 0 8 21"><path d="M1.500 0v21M5.500 0v21" stroke="#a8a8a8" stroke-width="2" stroke-dasharray="2 2"/></svg>
          <button class="ml-[7px]" aria-label="Close command line"><svg class="w-[12px] h-[11px]" viewBox="0 0 12 11"><path d="m1 0 10 11M11 0 1 11" stroke="#e0e0e0" stroke-width="2.500"/></svg></button>
          <button class="ml-[13px]" aria-label="Command settings"><svg class="w-[19px] h-[19px]" viewBox="0 0 19 19"><path d="M3 1 7 5 5 8 1 6q0 5 6 6l7 6q4 1 4-3L11 8q0-7-8-7z" fill="#b0b4bb" stroke="#6b6f76" stroke-width=".8"/></svg></button>
        </div>
        <svg class="ml-[6px] w-[19px] h-[17px]" viewBox="0 0 19 17"><rect x=".5" y=".5" width="18" height="16" rx="2" fill="#8d929b" stroke="#7b808a"/><path d="m4 4 4 4-4 4M9 13h6" fill="none" stroke="#e4e6ea" stroke-width="1.600"/></svg>
        <svg class="ml-[3px] w-[8px] h-[5px] text-[#66686c]"><use href="#tri"/></svg>
        <input class="ml-[10px] flex-1 text-lg leading-6 italic font-['DejaVu_Sans_Mono',monospace] placeholder:text-[#77787b]" placeholder="Type a command" aria-label="Command" />
        <svg class="mr-[6px] w-[10px] h-[6px] rotate-180 text-[#2a2a2a]"><use href="#tri"/></svg>
      </div>
    </main>

    <!-- layout tabs -->
    <div class="h-[22px] mx-[2px] pt-[2px] flex items-stretch bg-[#efefef] text-[13px] text-black font-['Liberation_Sans',sans-serif] border-b-2 border-white">
      <div class="flex text-[#555555]">
        <button class="w-[19px] flex items-center justify-center border-r border-[#bbbbbb]" aria-label="First"><svg class="w-[9px] h-[10px]" viewBox="0 0 9 10"><path d="M0 0h1.500v10H0zM9 0v10L3 5z" fill="currentColor"/></svg></button>
        <button class="w-[19px] flex items-center justify-center border-r border-[#bbbbbb]" aria-label="Previous"><svg class="w-[7px] h-[10px]" viewBox="0 0 7 10"><path d="M7 0v10L0 5z" fill="currentColor"/></svg></button>
        <button class="w-[19px] flex items-center justify-center border-r border-[#bbbbbb]" aria-label="Next"><svg class="w-[7px] h-[10px]" viewBox="0 0 7 10"><path d="M0 0v10l7-5z" fill="currentColor"/></svg></button>
        <button class="w-[19px] flex items-center justify-center border-r border-[#bbbbbb]" aria-label="Last"><svg class="w-[9px] h-[10px]" viewBox="0 0 9 10"><path d="M7.500 0H9v10H7.500zM0 0v10l6-5z" fill="currentColor"/></svg></button>
      </div>
      <button class="w-[67px] bg-[#212830] text-white [clip-path:polygon(4px_0,100%_0,61px_100%,8px_100%)]">Model</button>
      <button class="w-[59px] bg-white">Layout1</button>
      <svg class="w-[6px] h-full" viewBox="0 0 6 18"><path d="M0 0h5L1 18H0z" fill="#fff"/><path d="M5 0 1 18" stroke="#333"/></svg>
      <button class="w-[60px] bg-white">Layout2</button>
      <svg class="w-[6px] h-full" viewBox="0 0 6 18"><path d="M0 0h5L1 18H0z" fill="#fff"/><path d="M5 0 1 18" stroke="#333"/></svg>
    </div>

    <!-- status bar -->
    <div class="h-[22px] flex items-stretch border-t border-black bg-linear-to-b from-[#999999] to-[#757575] text-[13px] text-black font-['Liberation_Sans',sans-serif]">
      <span class="w-[202px] pl-[12px] pt-px text-xs leading-[20px] border-r border-[#4a4a4a]">2379.4188, 1232.0402, 0.0000</span>
      <button class="w-[45px] pt-px border-r border-[#4a4a4a] bg-linear-to-b from-[#c4c2c4] to-[#a2a2a2]">INFER</button>
      <button class="w-[43px] pt-px border-r border-[#4a4a4a] bg-linear-to-b from-[#c4c2c4] to-[#a2a2a2]">SNAP</button>
      <button class="w-[39px] pt-px border-r border-[#4a4a4a] bg-linear-to-b from-[#e2f2f8] to-[#86c5d6]">GRID</button>
      <button class="w-[55px] pt-px border-r border-[#4a4a4a] bg-linear-to-b from-[#c4c2c4] to-[#a2a2a2]">ORTHO</button>
      <button class="w-[51px] pt-px border-r border-[#4a4a4a] bg-linear-to-b from-[#c4c2c4] to-[#a2a2a2]">POLAR</button>
      <button class="w-[53px] pt-px border-r border-[#4a4a4a] bg-linear-to-b from-[#e2f2f8] to-[#86c5d6]">OSNAP</button>
      <button class="w-[70px] pt-px border-r border-[#4a4a4a] bg-linear-to-b from-[#c4c2c4] to-[#a2a2a2]">3DOSNAP</button>
      <button class="w-[61px] pt-px border-r border-[#4a4a4a] bg-linear-to-b from-[#c4c2c4] to-[#a2a2a2]">OTRACK</button>
      <button class="w-[44px] pt-px border-r border-[#4a4a4a] bg-linear-to-b from-[#e2f2f8] to-[#86c5d6]">DUCS</button>
      <button class="w-[36px] pt-px border-r border-[#4a4a4a] bg-linear-to-b from-[#c4c2c4] to-[#a2a2a2]">DYN</button>
      <button class="w-[34px] pt-px border-r border-[#4a4a4a] bg-linear-to-b from-[#c4c2c4] to-[#a2a2a2]">LWT</button>
      <button class="w-[33px] pt-px border-r border-[#4a4a4a] bg-linear-to-b from-[#e2f2f8] to-[#86c5d6]">TPY</button>
      <button class="w-[25px] pt-px border-r border-[#4a4a4a] bg-linear-to-b from-[#c4c2c4] to-[#a2a2a2]">QP</button>
      <button class="w-[24px] pt-px border-r border-[#4a4a4a] bg-linear-to-b from-[#c4c2c4] to-[#a2a2a2]">SC</button>
      <button class="w-[26px] pt-px border-r border-[#4a4a4a] bg-linear-to-b from-[#c4c2c4] to-[#a2a2a2]">AM</button>

      <div class="ml-auto mr-[2px] flex items-stretch">
        <button class="w-[53px] pt-px border-x border-[#4a4a4a] bg-linear-to-b from-[#c4c2c4] to-[#a2a2a2]">MODEL</button>
        <button class="w-[22px] flex items-center justify-center border-r border-[#4a4a4a] bg-linear-to-b from-[#c4c2c4] to-[#a2a2a2]" aria-label="Quick view layouts"><svg class="w-[16px] h-[16px]" viewBox="0 0 16 16"><path d="M2 1h11v11H2z" fill="#eee" stroke="#444"/><path d="M5 4v6h5z" fill="none" stroke="#444" stroke-width="1.500"/><path d="M0 15h16" stroke="#333" stroke-width="2"/></svg></button>
        <button class="w-[22px] flex items-center justify-center border-r border-[#4a4a4a] bg-linear-to-b from-[#c4c2c4] to-[#a2a2a2]" aria-label="Quick view drawings"><svg class="w-[16px] h-[16px]" viewBox="0 0 16 16"><path d="M1 2h6v7H1zM9 2h6v7H9z" fill="#eee" stroke="#444"/><path d="M0 13h16" stroke="#333" stroke-width="2.500"/></svg></button>
        <button class="ml-[13px] w-[53px] pt-px flex items-center justify-center gap-[3px] border-x border-[#4a4a4a] bg-linear-to-b from-[#c4c2c4] to-[#a2a2a2]"><svg class="w-[15px] h-[15px]" viewBox="0 0 15 15"><path d="m7.500 1 1.500 8 5 4-5-1H6l-5 1 5-4z" fill="#f4f4f4" stroke="#444"/></svg>1:1<svg class="w-[7px] h-[5px]"><use href="#tri"/></svg></button>
        <button class="w-[22px] flex items-center justify-center border-r border-[#4a4a4a] bg-linear-to-b from-[#c4c2c4] to-[#a2a2a2]" aria-label="Annotation visibility"><svg class="w-[16px] h-[15px]" viewBox="0 0 16 15"><path d="m7.500 1 1.500 8 5 4-5-1H6l-5 1 5-4z" fill="#f4f4f4" stroke="#444"/><circle cx="13" cy="8" r="3" fill="#ffd45c" stroke="#e08a1a"/><path d="M13 11v3" stroke="#777" stroke-width="2"/></svg></button>
        <button class="w-[23px] flex items-center justify-center border-r border-[#4a4a4a] bg-linear-to-b from-[#c4c2c4] to-[#a2a2a2]" aria-label="Auto scale"><svg class="w-[16px] h-[15px]" viewBox="0 0 16 15"><path d="m8 1 1 8 5 4-5-1H6l-5 1 5-4zM3 3l3-2M2 7l3-2" fill="#bdbdbd" stroke="#858585" stroke-width="1.300"/></svg></button>
        <button class="ml-[5px] w-[23px] flex items-center justify-center border-x border-[#4a4a4a] bg-linear-to-b from-[#c4c2c4] to-[#a2a2a2]" aria-label="Workspace switching"><svg class="w-[17px] h-[17px]" viewBox="0 0 17 17"><circle cx="8" cy="8" r="6.500" fill="#eee" stroke="#444" stroke-width="2" stroke-dasharray="3 2"/><circle cx="8" cy="8" r="6" fill="#e8e8e8"/><circle cx="8" cy="8" r="2.500" fill="#fff" stroke="#555" stroke-width="1.500"/><path d="M17 12v5h-5z"/></svg></button>
        <button class="w-[22px] flex items-center justify-center border-r border-[#4a4a4a] bg-linear-to-b from-[#c4c2c4] to-[#a2a2a2]" aria-label="Toolbar lock"><svg class="w-[16px] h-[15px]" viewBox="0 0 16 15"><path d="M1 6h9v8H1z" fill="#e4e4e4" stroke="#333" stroke-width="1.300"/><path d="M8 6V3q0-2 3-2t4 2v3" fill="none" stroke="#333" stroke-width="1.500"/><path d="M5.500 8v4" stroke="#333" stroke-width="1.500"/></svg></button>
        <button class="w-[22px] flex items-center justify-center border-r border-[#4a4a4a] bg-linear-to-b from-[#c4c2c4] to-[#a2a2a2]" aria-label="Hardware acceleration"><svg class="w-[16px] h-[16px]" viewBox="0 0 16 16"><path d="M1 4h11v6H1z" fill="#566a8c"/><path d="M2 2v10M5 2v10M8 2v10M11 2v3" stroke="#566a8c"/><circle cx="13" cy="9" r="2.500" fill="#b8dcff" stroke="#3b76c0"/><path d="M13 12v3" stroke="#666" stroke-width="2"/></svg></button>
        <div class="w-[46px] h-[18px] mt-px flex items-center justify-around border border-t-2 border-[#3c3c3c] bg-[#a3a3a3]">
          <svg class="w-[16px] h-[15px]" viewBox="0 0 16 15"><path d="M1 1h8l4 3v7H1z" fill="#3a6ea8"/><path d="M1 6h8v6H1z" fill="#f0d048"/><path d="m6 9 3 4 6-6" fill="none" stroke="#3ca31e" stroke-width="2.500"/></svg>
          <svg class="w-[11px] h-[15px]" viewBox="0 0 11 15"><path d="M5.500 1a4 4 0 0 1 4 4c0 3-2 3-2 6h-4c0-3-2-3-2-6a4 4 0 0 1 4-4z" fill="#fbe6a2" stroke="#a58b46"/><path d="M4 11h3v3H4z" fill="#eee"/></svg>
        </div>
        <button class="ml-[7px] w-[12px] flex items-center justify-center border-x border-[#4a4a4a] bg-linear-to-b from-[#c4c2c4] to-[#a2a2a2]" aria-label="Status bar menu"><svg class="w-[6px] h-[4px]"><use href="#tri"/></svg></button>
        <button class="w-[21px] flex items-center justify-center bg-linear-to-b from-[#c4c2c4] to-[#a2a2a2]" aria-label="Clean screen"><svg class="w-[14px] h-[14px]" viewBox="0 0 14 14"><path d="M1 1h12v12H1z" fill="#eee" stroke="#444"/><path d="M1 3h12" stroke="#555" stroke-width="2"/></svg></button>
      </div>
    </div>

    <!-- taskbar -->
    <footer class="h-[48px] flex items-center bg-linear-to-r from-[#43536d] via-[#475b7e] via-70% to-[#454f5c] text-white">
      <button class="w-[60px] flex justify-center" aria-label="Start"><svg class="w-[33px] h-[33px]" viewBox="0 0 33 33"><path d="m0 4 14-2v14H0zM15 2l18-2v16H15zM0 17h14v14L0 29zM15 17h18v16l-18-2z" fill="#fff"/></svg></button>
      <button class="w-[71px] flex justify-center" aria-label="Internet Explorer"><svg class="w-[38px] h-[38px]" viewBox="0 0 38 38"><path d="M34 23H13c1 7 9 7 12 3h8C29 40 6 39 5 21 5 4 35 2 34 23M13 17h13c-1-7-12-7-13 0" fill="#58bdf0" stroke="#2d8fd0" stroke-width=".7"/><path d="M35 10C38-2 26 0 16 8 6 16-3 31 2 36c3 3 8 0 12-3-6 2-9 1-9-3C5 23 27-1 34 3c1 1 2 4 1 7z" fill="#f7c52d"/></svg></button>
      <button class="ml-[4px] w-[70px] h-[47px] flex items-center justify-center border border-[#8994a8] bg-[#6a788f]" aria-label="File Explorer"><svg class="w-[40px] h-[38px]" viewBox="0 0 40 38"><path d="M2 2q0-1 2-1h10l2 2h21q1 0 1 2v25H2z" fill="#e6c35c"/><path d="M6 2h7v4H6z" fill="#f4f4f4"/><path d="M5 2h3v4H5z" fill="#38a35a"/><path d="M14 4h9v4h-9z" fill="#f4f4f4"/><path d="M14 4h4v4h-4z" fill="#e05028"/><path d="M26 7h9v4h-9z" fill="#f4f4f4"/><path d="M26 7h3v4h-3z" fill="#2f8ede"/><path d="M1 7h11l3 4h10l2 2h11v22q0 2-2 2H3q-2 0-2-2z" fill="#f3de8c" stroke="#d9b957"/><path d="M5 37V25q0-2 2-2h26q3 0 3 2v12h-8v-6H14v6z" fill="#8fd0ea" stroke="#5aa8cc"/></svg></button>
      <button class="w-[74px] flex justify-center" aria-label="Firefox"><svg class="w-[38px] h-[38px]" viewBox="0 0 38 38"><circle cx="19" cy="18" r="17" fill="url(#gFox)"/><path d="M3 6q2 2 4 2 3-2 7-1l-1 5 4 2q1 2-4 5-1 4 3 7 6 4 11 0-7 0-8-4 4-2 7-1-1-5-6-6 5-3 9 0 3-5-2-12 9 5 8 17-3 9-10 11 10-4 11-16 0-7-4-10 6 5 6 14-1 18-19 18Q1 36 1 19 1 12 4 10z" fill="#ea6a22"/><path d="M31 5q7 8 4 20-4 11-14 11 17-3 17-18-1-9-7-13z" fill="#f9cf4a"/></svg></button>
      <button class="w-[70px] flex justify-center" aria-label="GOM Player"><svg class="w-[40px] h-[40px]" viewBox="0 0 40 40"><ellipse cx="21" cy="25" rx="17" ry="14" fill="url(#gOrange)" transform="rotate(35 21 25)"/><circle cx="5" cy="9" r="4.500" fill="#f58a14"/><circle cx="13" cy="5" r="3.500" fill="#f58a14"/><circle cx="20" cy="4" r="3" fill="#f58a14"/><circle cx="27" cy="4" r="2.500" fill="#f58a14"/><circle cx="32" cy="6" r="2" fill="#f58a14"/><ellipse cx="17" cy="19" rx="10" ry="7.500" fill="#fbf6ee" transform="rotate(-20 17 19)"/></svg></button>
      <button class="w-[76px] pl-[2px] flex justify-center" aria-label="Store"><svg class="w-[38px] h-[38px]" viewBox="0 0 38 38"><path d="M0 0h38v38H0z" fill="#048a04"/><path d="m5 12 27-2-1 24-25-3z" fill="#fff"/><path d="M10 12q1-8 6-8 4 0 4 7M14 11q1-6 5-6 4 0 4 5" fill="none" stroke="#fff" stroke-width="1.300"/><path d="m9 17 6-1v6H9zM16 16l6-1v7h-6zM9 23h6v5l-6-1zM16 23h6v6l-6-1z" fill="#048a04"/></svg></button>
      <button class="ml-[2px] w-[70px] h-[47px] flex items-center justify-center border border-[#8994a8] bg-[#657389]" aria-label="Utility"><svg class="w-[40px] h-[40px]" viewBox="0 0 40 40"><circle cx="20" cy="20" r="19" fill="#1d2026" stroke="#b4b9c2" stroke-width="1.500"/><path d="M8 14a14 14 0 1 0 24 0" fill="none" stroke="#2a97ea" stroke-width="6"/><path d="M20 27v8" stroke="#0e2c4c" stroke-width="4"/><circle cx="20" cy="20" r="9" fill="#2a6ea8" stroke="#aab6c4" stroke-width="2.500"/><circle cx="20" cy="20" r="6.500" fill="#3fbdf5"/><path d="M20 15v5M17 17a4 4 0 1 0 6 0" fill="none" stroke="#fff" stroke-width="1.500"/><path d="M9 10q11-9 22 0" fill="none" stroke="#c6ccd4" stroke-width="2" stroke-dasharray="2 1"/></svg></button>
      <button class="ml-[3px] w-[70px] h-[47px] flex items-center justify-center border border-[#8994a8] bg-[#657389]" aria-label="Pictures"><svg class="w-[38px] h-[34px]" viewBox="0 0 38 34"><path d="M2 9V2h8M28 2h8v7M36 25v7h-8M10 32H2v-7" fill="none" stroke="#3a7fc2" stroke-width="4"/><path d="M3 4h32v26H3z" fill="#f4f7fa"/><path d="M4 5h30v24H4z" fill="url(#gPhoto)"/><path d="M4 13q8 4 14 4 8-4 16-3v6H4z" fill="#3f7d50"/><path d="M4 20h30v9H4z" fill="#5b93b0"/><path d="M4 20h30v3q-14 1-30 0z" fill="#3d6f66"/></svg></button>
      <button class="ml-[3px] w-[70px] h-[47px] flex items-center justify-center border border-[#dfe3ea] bg-[#8b96a8]" aria-label="AutoCAD"><svg class="w-[40px] h-[38px]" viewBox="0 0 40 38"><path d="M1 6h38v32H1z" fill="#151515"/><path d="M1 27h38v11H1z" fill="#d80a0a"/><path d="M25 8h12v12l-4 4-6-6z" fill="#4a4a4a"/><path d="m27 10 8 8M36 9l-7 6M29 17l6 3" stroke="#8a8a8a" stroke-width=".7"/><path d="m6 29 5-28h9l8 22-6 1-3-5-6 1-2 11zM15 13l3-1-2-6z" fill="#dcdcde" stroke="#777" stroke-width=".6"/><path d="m20 1 8 22-6 1-7-18z" fill="#a8a8ab"/></svg></button>
      <div class="ml-auto flex items-center mr-[20px] pt-[2px]">
        <svg class="w-[9px] h-[5px] rotate-180 mr-[20px]"><use href="#tri"/></svg>
        <svg class="w-[20px] h-[20px] mr-[16px]" viewBox="0 0 20 20"><path d="M2 1v18" stroke="#fff" stroke-width="1.500"/><path d="M3 2q4-1 8 1v2q3 1 7 0l-3 6q-3 1-5-1-4-1-7 0z" fill="#fff"/></svg>
        <svg class="w-[11px] h-[20px] mr-[12px]" viewBox="0 0 11 20"><path d="M3 2h5v1h2v15H1V3h2z" fill="none" stroke="#fff" stroke-width="1.500"/><path d="M3 5h5v11H3z" fill="#fff"/></svg>
        <svg class="w-[17px] h-[18px] mr-[15px]" viewBox="0 0 17 18"><path d="M1 14h2v3H1zM4 12h2v5H4zM7.500 9h2v8h-2zM11 5h2v12h-2zM14.500 1h2v16h-2z" fill="#fff"/></svg>
        <svg class="w-[18px] h-[20px] mr-[22px]" viewBox="0 0 18 20"><path d="M1 6h3l6-5v18l-6-5H1z" fill="#fff"/><path d="M14 6q3 4 0 8" fill="none" stroke="#c9ced8" stroke-width="1.300"/></svg>
        <div class="w-[55px] text-center leading-[22px]"><p>01:03</p><p>4.6.2014</p></div>
      </div>
    </footer>

    <script>
      // grid: verticals every 16px, diagonals every 60px, each fifth one is a major line
      const stepX = 16, stepY = 60, slope = 300 / 274.3;
      const paths = { minor: '', major: '' };
      for (let i = -5; i < 240; i++) {
        paths[i % 5 === 0 ? 'major' : 'minor'] += `M${66.5 + i * stepX} 0V2400`;
      }
      for (let i = -20; i < 100; i++) {
        const y = 437.7 + i * stepY;
        paths[i % 5 === 0 ? 'major' : 'minor'] += `M0 ${y}L4000 ${y - 4000 * slope}`;
      }
      for (const id in paths) document.getElementById(id).setAttribute('d', paths[id]);
    </script>
  </body>
</html>
